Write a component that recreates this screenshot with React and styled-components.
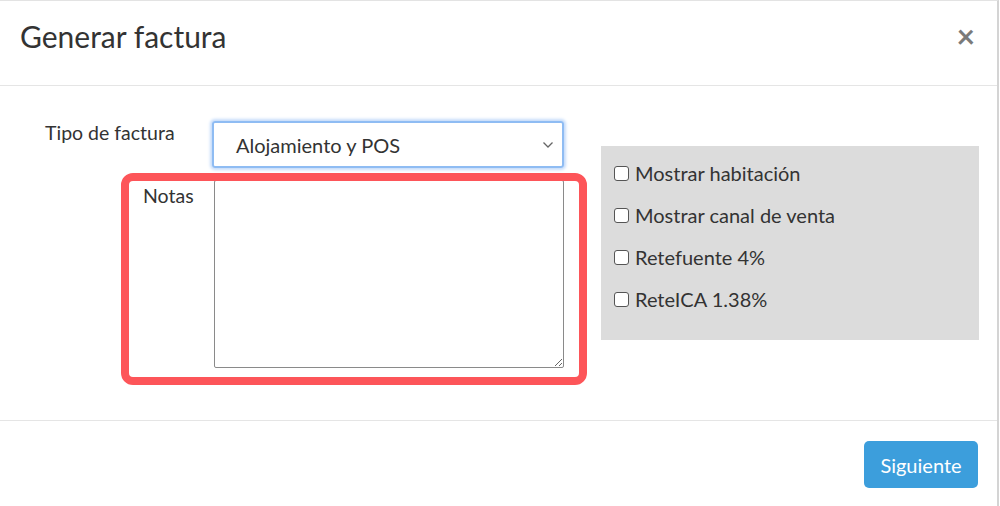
import React from 'react';
import styled, { createGlobalStyle } from 'styled-components';

const GlobalStyle = createGlobalStyle`
    body {
        margin: 0;
        font-family: Lato, "Open Sans", sans-serif;
        color: #333;
        background: #fff;
    }
`;

export default function App() {
    const options = [
        'Mostrar habitación',
        'Mostrar canal de venta',
        'Retefuente 4%',
        'ReteICA 1.38%',
    ];

    return (
        <>
            <GlobalStyle />
            <Modal>
                <Header>
                    <Title>Generar factura</Title>
                    <Close>×</Close>
                </Header>
                <Body>
                    <FormCol>
                        <Row>
                            <Label $width={212} $left={45}>Tipo de factura</Label>
                            <SelectBox>
                                <span>Alojamiento y POS</span>
                                <svg width="12" height="8" viewBox="0 0 12 8">
                                    <path d="M1.5 1.5 L6 6 L10.5 1.5" fill="none" stroke="#666" strokeWidth="1.3" />
                                </svg>
                            </SelectBox>
                        </Row>
                        <Row $top={12}>
                            <Label $width={214} $left={143} $pad={4}>Notas</Label>
                            <Notes />
                        </Row>
                        <Highlight />
                    </FormCol>
                    <Panel>
                        {options.map((opt) => (
                            <Check key={opt}>
                                <Box />
                                {opt}
                            </Check>
                        ))}
                    </Panel>
                </Body>
                <Footer>
                    <Button>Siguiente</Button>
                </Footer>
            </Modal>
        </>
    );
}

const Modal = styled.div`
    width: 999px;
    height: 506px;
    box-sizing: border-box;
    border-top: 1px solid #e3e3e3;
    border-right: 2px solid #d4d4d4;
    display: flex;
    flex-direction: column;
`;

const Header = styled.div`
    height: 85px;
    box-sizing: border-box;
    border-bottom: 1px solid #e5e5e5;
    display: flex;
    align-items: center;
    justify-content: space-between;
    padding: 0 20px 14px 20px;
`;

const Title = styled.h4`
    margin: 0;
    font-size: 30px;
    font-weight: 400;
    color: #333;
`;

const Close = styled.span`
    font-size: 32px;
    font-weight: 700;
    color: #7a7a7a;
    line-height: 1;
    margin-right: 2px;
`;

const Body = styled.div`
    height: 335px;
    box-sizing: border-box;
    border-bottom: 1px solid #e5e5e5;
    padding-top: 35px;
    display: flex;
    align-items: flex-start;
`;

const FormCol = styled.div`
    position: relative;
    width: 587px;
`;

const Row = styled.div`
    display: flex;
    align-items: flex-start;
    margin-top: ${(p) => p.$top || 0}px;
`;

const Label = styled.label`
    width: ${(p) => p.$width}px;
    box-sizing: border-box;
    padding-left: ${(p) => p.$left}px;
    padding-top: ${(p) => p.$pad || 0}px;
    font-size: 19.5px;
    color: #333;
    line-height: 24px;
`;

const SelectBox = styled.div`
    width: 352px;
    height: 47px;
    box-sizing: border-box;
    border: 2px solid #8fbcf3;
    box-shadow: 0 0 3px 2px #c6dcfa;
    border-radius: 3px;
    display: flex;
    align-items: center;
    justify-content: space-between;
    padding: 0 8px 0 22px;
    font-size: 20px;
    color: #333;
`;

const Notes = styled.textarea`
    width: 350px;
    height: 188px;
    box-sizing: border-box;
    border: 1px solid #8a8a8a;
    border-radius: 2px;
    font-family: inherit;
    margin: 0;
`;

const Highlight = styled.div`
    position: absolute;
    left: 121px;
    top: 52px;
    width: 466px;
    height: 212px;
    box-sizing: border-box;
    border: 8px solid #fd5559;
    border-radius: 12px;
    pointer-events: none;
`;

const Panel = styled.div`
    margin: 25px 0 0 14px;
    width: 378px;
    height: 194px;
    box-sizing: border-box;
    background: #dcdcdc;
    padding: 16px 0 0 13px;
    display: flex;
    flex-direction: column;
    gap: 20px;
`;

const Check = styled.div`
    display: flex;
    align-items: center;
    font-size: 20px;
    color: #333;
    line-height: 22px;
`;

const Box = styled.span`
    width: 15px;
    height: 15px;
    box-sizing: border-box;
    border: 1px solid #555;
    border-radius: 3px;
    background: #fff;
    margin-right: 6px;
`;

const Footer = styled.div`
    flex: 1;
    display: flex;
    justify-content: flex-end;
    align-items: center;
    padding: 0 19px 0 0;
`;

const Button = styled.button`
    width: 114px;
    height: 47px;
    border: none;
    border-radius: 5px;
    background: #3c9edc;
    color: #fff;
    font-family: inherit;
    font-size: 20px;
    margin-top: 2px;
`;
